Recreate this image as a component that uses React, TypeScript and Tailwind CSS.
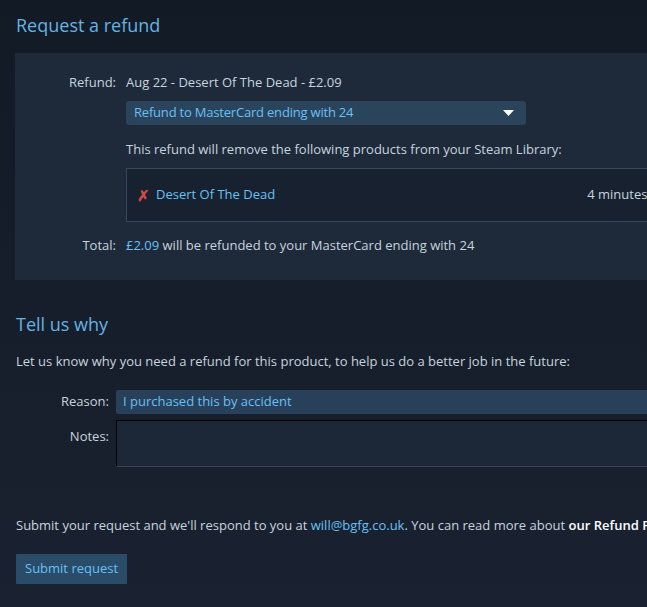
export default function App() {
  return (
    <div className="w-[647px] h-[607px] overflow-hidden bg-gradient-to-b from-[#121a25] to-[#1a2231] font-['Open_Sans',sans-serif] text-[13px] text-[#c6d4df]">
      <div className="w-[960px] px-[16px] pt-[12px]">
        <h2 className="text-[18px] leading-[26px] text-[#66b3e0] font-normal">Request a refund</h2>

        {/* Refund details panel */}
        <div className="mt-[15px] -ml-px bg-[#1e2a3a] pt-[20px] pb-[24px]">
          <div className="flex">
            <div className="w-[111px] text-right pr-[10px] shrink-0">Refund:</div>
            <div>Aug 22 - Desert Of The Dead - £2.09</div>
          </div>
          <div className="pl-[111px] mt-[8px]">
            <div className="w-[400px] h-[24px] rounded-[3px] bg-[#2a445c] text-[#67c1f5] flex items-center justify-between pl-[8px] pr-[12px]">
              <span className="tracking-[-0.2px]">Refund to MasterCard ending with 24</span>
              <svg width="11" height="6" viewBox="0 0 11 6">
                <path d="M0 0h11L5.5 6z" fill="#ffffff" />
              </svg>
            </div>
            <div className="mt-[15px]">This refund will remove the following products from your Steam Library:</div>
            <div className="mt-[9px] h-[54px] bg-[#172130] border border-[#34475c] flex items-center pl-[10px] pr-[20px] justify-between w-[586px]">
              <div className="flex items-center gap-[6px]">
                <span className="text-[#d04a45] font-bold text-[15px] leading-none">✗</span>
                <span className="text-[#67c1f5]">Desert Of The Dead</span>
              </div>
              <span>4 minutes played</span>
            </div>
          </div>
          <div className="flex mt-[14px]">
            <div className="w-[111px] text-right pr-[10px] shrink-0">Total:</div>
            <div>
              <span className="text-[#67c1f5]">£2.09</span> will be refunded to your MasterCard ending with 24
            </div>
          </div>
        </div>

        <h2 className="mt-[32px] text-[18px] leading-[24px] text-[#66b3e0]">Tell us why</h2>
        <p className="mt-[16px]">Let us know why you need a refund for this product, to help us do a better job in the future:</p>

        <div className="mt-[19px] flex items-center">
          <div className="w-[100px] text-right pr-[7px] shrink-0">Reason:</div>
          <div className="w-[600px] h-[24px] bg-[#28405a] rounded-[2px] text-[#67c1f5] flex items-center pl-[7px]">I purchased this by accident</div>
        </div>
        <div className="mt-[6px] flex">
          <div className="w-[100px] text-right pr-[7px] pt-[7px] shrink-0">Notes:</div>
          <div className="w-[600px] h-[47px] bg-[#1c2738] border border-black border-b-[#3a4450]" />
        </div>

        <p className="mt-[49px]">
          Submit your request and we'll respond to you at <span className="text-[#67c1f5]">will@bgfg.co.uk</span>. You can read more about <span className="font-semibold text-white">our Refund Policy</span>.
        </p>

        <button className="mt-[18px] h-[30px] px-[9px] bg-[#2a4c68] text-[#67c1f5] rounded-[1px]">Submit request</button>
      </div>
    </div>
  );
}
